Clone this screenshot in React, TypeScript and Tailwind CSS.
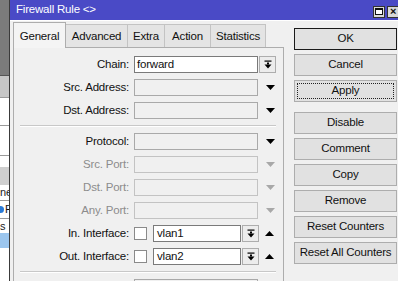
import React from "react";

const font = { fontFamily: '"Liberation Sans", Arial, sans-serif' };

function DropIcon() {
  return (
    <svg width="8" height="9" viewBox="0 0 8 9">
      <rect x="0.5" y="0.5" width="7" height="1.2" fill="#000" />
      <rect x="3" y="2.5" width="2" height="2" fill="#000" />
      <polygon points="0.5,4.5 7.5,4.5 4,8.5" fill="#000" />
    </svg>
  );
}

function Tri({ up = false, gray = false }: { up?: boolean; gray?: boolean }) {
  const c = gray ? "#a8a8a8" : "#000";
  return (
    <svg width="9" height="5" viewBox="0 0 9 5">
      {up ? <polygon points="0,5 9,5 4.5,0" fill={c} /> : <polygon points="0,0 9,0 4.5,5" fill={c} />}
    </svg>
  );
}

function DropBtn() {
  return (
    <div className="w-[17px] h-[17px] border border-[#adadad] bg-[#ececec] flex items-center justify-center">
      <DropIcon />
    </div>
  );
}

type RowProps = {
  label: string;
  kind: "chain" | "addr" | "port" | "iface";
  value?: string;
  gray?: boolean;
};

function Row({ label, kind, value, gray }: RowProps) {
  return (
    <div className="flex items-center h-[17px]">
      <div
        className={`w-[117px] pr-[2px] text-right leading-none ${gray ? "text-[#8c8c8c]" : "text-[#111]"}`}
      >
        {label}
      </div>
      <div className="w-[3px]" />
      {kind === "chain" && (
        <>
          <div className="w-[124px] h-[17px] border border-[#7a7a7a] bg-white flex items-center pl-[2px] leading-none">
            {value}
          </div>
          <div className="ml-[1px]">
            <DropBtn />
          </div>
        </>
      )}
      {kind === "addr" && (
        <>
          <div className="w-[124px] h-[17px] border border-[#a9a9a9] bg-[#f0f0f0]" />
          <div className="w-[25px] flex justify-center">
            <Tri />
          </div>
        </>
      )}
      {kind === "port" && (
        <>
          <div className="w-[124px] h-[17px] border border-[#c3c3c3] bg-[#f0f0f0]" />
          <div className="w-[25px] flex justify-center">
            <Tri gray />
          </div>
        </>
      )}
      {kind === "iface" && (
        <>
          <div className="w-[13px] h-[13px] border border-[#8a8a8a] bg-white" />
          <div className="w-[6px]" />
          <div className="w-[88px] h-[17px] border border-[#7a7a7a] bg-white flex items-center pl-[3px] leading-none">
            {value}
          </div>
          <div className="ml-[1px]">
            <DropBtn />
          </div>
          <div className="w-[20px] flex justify-center">
            <Tri up />
          </div>
        </>
      )}
    </div>
  );
}

function Sep() {
  return (
    <div className="ml-[6px] w-[256px]">
      <div className="h-[1px] bg-[#c8c8c8]" />
      <div className="h-[1px] bg-white" />
    </div>
  );
}

function Btn({ children, variant }: { children: React.ReactNode; variant?: "ok" | "focus" }) {
  return (
    <div
      className={`h-[22px] flex items-center justify-center bg-[#e1e1e1] border ${
        variant === "ok" ? "border-[#1a1a1a]" : "border-[#adadad]"
      } relative`}
    >
      {variant === "focus" && (
        <div className="absolute inset-[2px] border border-dotted border-[#222]" />
      )}
      <span className="leading-none">{children}</span>
    </div>
  );
}

function Tab({ label, active, w }: { label: string; active?: boolean; w: string }) {
  if (active) {
    return (
      <div
        className={`${w} h-[26px] pt-[3px] bg-[#f4f4f4] border border-b-0 border-[#adadad] flex items-center justify-center relative z-10 -mb-[1px]`}
      >
        {label}
      </div>
    );
  }
  return (
    <div
      className={`${w} h-[23px] pt-[2px] bg-[#e4e4e4] border border-l-0 border-[#c3c3c3] border-b-0 flex items-center justify-center`}
    >
      {label}
    </div>
  );
}

export default function App() {
  return (
    <div
      className="w-[398px] h-[281px] overflow-hidden flex bg-[#f0f0f0] text-[11.5px] tracking-[-0.2px] text-[#111]"
      style={font}
    >
      {/* background app strip */}
      <div className="w-[9px] flex flex-col shrink-0 overflow-hidden">
        <div className="h-[75px] bg-[#7b7b7b]" />
        <div className="h-[1px] bg-[#555]" />
        <div className="h-[21px] bg-[#c6c6c6]" />
        <div className="h-[1px] bg-[#9a9a9a]" />
        <div className="h-[27px] bg-white" />
        <div className="h-[1px] bg-[#9a9a9a]" />
        <div className="h-[29px] bg-white" />
        <div className="h-[1px] bg-[#9a9a9a]" />
        <div className="h-[11px] bg-white" />
        <div className="h-[18px] bg-[#cfcfcf]" />
        <div className="h-[15px] bg-white text-[11px] leading-[15px] text-[#222] whitespace-nowrap overflow-hidden">ne</div>
        <div className="h-[1px] bg-[#9a9a9a]" />
        <div className="h-[17px] bg-white flex items-center -ml-[3px]">
          <div className="w-[7px] h-[7px] rounded-full bg-[#2b7bd6] mr-[1px] shrink-0" />
          <span className="text-[11px] leading-none">F</span>
        </div>
        <div className="h-[1px] bg-[#9a9a9a]" />
        <div className="h-[14px] bg-white text-[11px] leading-[14px] text-[#222]">s</div>
        <div className="h-[15px] bg-[#9cc6ee]" />
        <div className="flex-1 bg-white" />
      </div>

      {/* window */}
      <div className="flex-1 flex flex-col border-l border-[#3a3a3a] min-w-0">
        <div className="h-[20px] bg-[#4a4ac6] flex items-center shrink-0">
          <span className="ml-[6px] text-white text-[11.5px]">Firewall Rule &lt;&gt;</span>
          <div className="flex-1" />
          <div className="w-[12px] h-[12px] bg-[#d8d8d8] border border-[#333] flex items-center justify-center mt-[3px]">
            <div className="w-[8px] h-[7px] border border-[#111] border-t-2 bg-white" />
          </div>
          <div className="w-[12px] h-[12px] bg-[#d8d8d8] border border-[#333] ml-[2px] -mr-[1px] flex items-center justify-center mt-[3px] text-[11px] font-bold leading-none">
            ×
          </div>
        </div>
        <div className="h-[1px] bg-white" />
        <div className="flex-1 flex min-h-0">
          {/* left: tabs + panel */}
          <div className="w-[274px] pl-[3px] pt-[1px] flex flex-col shrink-0">
            <div className="flex items-end h-[26px]">
              <Tab label="General" active w="w-[53px]" />
              <Tab label="Advanced" w="w-[62px]" />
              <Tab label="Extra" w="w-[37px]" />
              <Tab label="Action" w="w-[46px]" />
              <Tab label="Statistics" w="w-[55px]" />
            </div>
            <div className="flex-1 border border-[#adadad] bg-[#f0f0f0] pt-[8px] flex flex-col gap-[6px]">
              <Row label="Chain:" kind="chain" value="forward" />
              <Row label="Src. Address:" kind="addr" />
              <Row label="Dst. Address:" kind="addr" />
              <Sep />
              <Row label="Protocol:" kind="addr" />
              <Row label="Src. Port:" kind="port" gray />
              <Row label="Dst. Port:" kind="port" gray />
              <Row label="Any. Port:" kind="port" gray />
              <Row label="In. Interface:" kind="iface" value="vlan1" />
              <Row label="Out. Interface:" kind="iface" value="vlan2" />
              <Sep />
              <div className="flex h-[17px]">
                <div className="w-[120px]" />
                <div className="w-[124px] h-[17px] border border-[#a9a9a9] bg-[#f0f0f0]" />
              </div>
            </div>
          </div>
          {/* right: buttons */}
          <div className="ml-[10px] w-[103px] pt-[7px] flex flex-col gap-[4px] shrink-0">
            <Btn variant="ok">OK</Btn>
            <Btn>Cancel</Btn>
            <Btn variant="focus">Apply</Btn>
            <div className="h-[2px]" />
            <Btn>Disable</Btn>
            <Btn>Comment</Btn>
            <Btn>Copy</Btn>
            <Btn>Remove</Btn>
            <Btn>Reset Counters</Btn>
            <Btn>Reset All Counters</Btn>
          </div>
        </div>
      </div>
    </div>
  );
}
